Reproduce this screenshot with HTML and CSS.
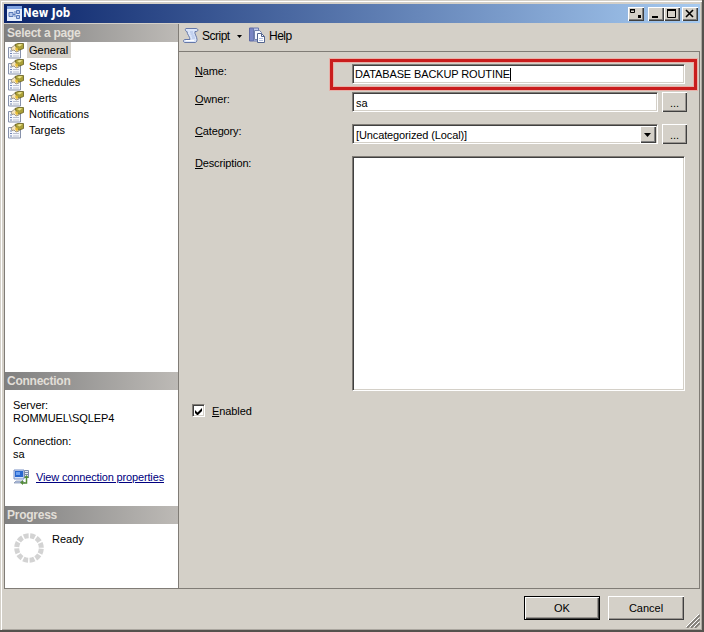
FILE: index.html
```html
<!DOCTYPE html>
<html lang="en">
<head>
<meta charset="utf-8">
<title>New Job</title>
<link rel="stylesheet" href="styles.css">
</head>
<body>
<svg width="0" height="0" class="defs">
  <symbol id="page" viewBox="0 0 16 16">
    <path d="M.5 4.500h12v10.500H.5z" fill="#f5f7fb" stroke="#8792ab"/>
    <path d="M2 8h2M2 10.500h2M2 13h2" stroke="#7185b5"/><path d="M5 10.500h6M5 13h6" stroke="#b9bfd0"/>
    <path d="M3 5l4-3 3 1 1 5-3 1-2-2-2 .5z" fill="#f6e6c0" stroke="#7c7462" stroke-width=".7"/>
    <path d="M7 1.500L10 .5h5.500v5l-4 1.500-3-2z" fill="#aaa038" stroke="#655e20" stroke-width=".8"/>
    <path d="M9 2l3-1 2.500.5-3 2z" fill="#eee58e"/><path d="M8 4l2.500 2-1.500 2.500L7 6z" fill="#e6bd35"/>
  </symbol>
</svg>
<div class="window">
  <header class="titlebar">
    <svg class="appicon" width="15" height="15" viewBox="0 0 15 15"><path fill="#e5edfb" d="M0 0h15v15H0z"/><path fill="#7fa2e0" d="M0 0h15v3H0z"/><path d="M2 6.500h4v4H2zM9.500 4.500h3v3h-3zM9.500 9.500h3v3h-3z" fill="#b7c9ed" stroke="#5878b8"/><path d="M6 8.500h2M8 5v6" stroke="#5878b8"/></svg>
    <span class="title">New Job</span>
    <span class="tb dock"><svg width="16" height="14"><path d="M2.500 3v2.500h4V3zM2 2.500h5" fill="none" stroke="#000"/><path d="M10 8h3v3h-3z"/></svg></span>
    <span class="tb"><svg width="16" height="14"><path d="M4 9h6v2H4z"/></svg></span>
    <span class="tb max"><svg width="16" height="14"><path d="M3.500 3v7.500h8V3" fill="none" stroke="#000"/><path d="M3 2h9v2H3z"/></svg></span>
    <span class="tb"><svg width="16" height="14"><path d="M4 3l7 7M11 3l-7 7" stroke="#000" stroke-width="1.600"/></svg></span>
  </header>
  <div class="body">
    <aside class="side">
      <h2>Select a page</h2>
      <ul class="pages">
        <li><svg width="16" height="16"><use href="#page"/></svg><span class="sel">General</span></li>
        <li><svg width="16" height="16"><use href="#page"/></svg><span>Steps</span></li>
        <li><svg width="16" height="16"><use href="#page"/></svg><span>Schedules</span></li>
        <li><svg width="16" height="16"><use href="#page"/></svg><span>Alerts</span></li>
        <li><svg width="16" height="16"><use href="#page"/></svg><span>Notifications</span></li>
        <li><svg width="16" height="16"><use href="#page"/></svg><span>Targets</span></li>
      </ul>
      <h2>Connection</h2>
      <div class="conn">
        <p>Server:<br><span class="server">ROMMUEL\SQLEP4</span></p>
        <p>Connection:<br>sa</p>
        <div class="link"><svg width="17" height="16" viewBox="0 0 17 16"><path d="M1 1h10v9H1z" fill="#d7e2f8" stroke="#7990c5"/><path d="M2 2h8v6H2z" fill="#2867cf"/><path d="M3 3h4v3H3z" fill="#6ba0f1"/><path d="M3 12h7l2 2H1z" fill="#b6c4e2" stroke="#7d8cac" stroke-width=".7"/><path d="M11.500 1.500h4v7h-4z" fill="#e7edf7" stroke="#7d8cac"/><path d="M12 3.500h3M12 5.500h3" stroke="#7d8cac"/><path d="M13.500 7v7H9" fill="none" stroke="#548c38" stroke-width="1.500"/><path d="M11 9l2.500-3L16 9zM10 11v5l-3-2.500z" fill="#548c38"/></svg><a>View connection properties</a></div>
      </div>
      <h2>Progress</h2>
      <div class="progress"><svg width="30" height="30" viewBox="0 0 30 30"><circle cx="15" cy="15" r="12.300" fill="none" stroke="#d3d3d3" stroke-width="5" stroke-dasharray="4.900 1.540" stroke-dashoffset="-.8"/></svg><span>Ready</span></div>
    </aside>
    <main class="main">
      <nav class="toolbar">
        <svg width="17" height="17" viewBox="0 0 17 17"><path d="M3 1.500h10c2.500 0 2.500 3 0 3h-1c-1 2 2 5 2 8 0 2-1 3-2 3H2c-2 0-2-3 0-3h5c0-3-3-5-3-8-2 0-2-3-1-3z" fill="#dce6fa" stroke="#6477a8"/><path d="M7 5h3M7.500 7h3M8.500 9h3M9 11h3" stroke="#a9bce4"/><path d="M3 13.500h8" stroke="#fff"/></svg>
        <span class="script">Script</span>
        <svg class="arrow" width="5" height="3"><path d="M0 0h5L2.500 3z"/></svg>
        <svg class="helpicon" width="16" height="16" viewBox="0 0 16 16"><path d="M.5 1h4v13h-4z" fill="#7985c4" stroke="#5f6aa4"/><path d="M4.500 1h5v13h-5z" fill="#c1caec" stroke="#6877ad"/><path d="M5.500 3.500h5l2 2v7h-7z" fill="#f4f7ff" stroke="#7382ad"/><path d="M8.500 6.500h4l3 3v6h-7z" fill="#fff" stroke="#53648f"/><path d="M12.500 6.500v3h3" fill="none" stroke="#53648f"/><path d="M10 11.500h4M10 13.500h4" stroke="#b3c0df"/></svg>
        <span class="help">Help</span>
      </nav>
      <form class="form">
        <div class="row name"><label><u>N</u>ame:</label><div class="field"><span class="caps">DATABASE BACKUP ROUTINE</span><i class="caret"></i></div></div>
        <div class="row owner"><label><u>O</u>wner:</label><div class="field">sa</div><span class="more">...</span></div>
        <div class="row category"><label><u>C</u>ategory:</label><div class="field combo"><span>[Uncategorized (Local)]</span><b class="drop"><svg width="7" height="4"><path d="M0 0h7L3.500 4z"/></svg></b></div><span class="more">...</span></div>
        <div class="row desc"><label><u>D</u>escription:</label><div class="field"></div></div>
        <div class="enabled"><i class="check"><svg width="9" height="9"><path d="M1 3v3l2 2h1l4-4V1L3.500 5.500z"/></svg></i><label><u>E</u>nabled</label></div>
      </form>
    </main>
  </div>
  <footer class="footer"><span class="btn ok"><span>OK</span></span><span class="btn"><span>Cancel</span></span></footer>
  <div class="highlight"></div>
  <svg class="grip" width="14" height="14"><path d="M1 14L14 1M5 14l9-9M9 14l5-5" stroke="#807d77" stroke-width="1.800"/><path d="M0 13L13 0M4 13l9-9M8 13l5-5" stroke="#fff"/></svg>
</div>
</body>
</html>
```
FILE: styles.css
```css
* { box-sizing: border-box; }
body { margin: 0; font: 11px/13px "Liberation Sans", Arial, sans-serif; color: #000; }
svg { display: block; flex: none; }
.defs { position: absolute; }
.window { position: relative; width: 704px; height: 632px; padding: 4px 2px 0 4px; background: #d4d0c8; border: solid #55524e; border-width: 0 2px 2px 0; box-shadow: inset 1px 1px #d4d0c8, inset 2px 2px #fff, inset -1px -1px #aaa69f; }
.titlebar { display: flex; align-items: center; width: 696px; height: 19px; padding: 0 2px 0 3px; background: linear-gradient(90deg, #0a246a, #a6caf0); }
.title { margin-left: 1px; flex: 1; color: #fff; font: bold 11.5px/13px "DejaVu Sans Condensed", "DejaVu Sans", sans-serif; }
.tb { width: 16px; height: 14px; background: #d4d0c8; box-shadow: inset 1px 1px #fff, inset -1px -1px #404040, inset -2px -2px #808080; }
.dock { margin-right: 4px; }
.max { margin-right: 2px; }
.body { display: flex; height: 565px; margin-top: 1px; width: 696px; border-bottom: 1px solid #807c76; }
.side { width: 175px; border-left: 1px solid #807c76; border-right: 1px solid #807c76; background: #fff; }
h2 { height: 18px; margin: 0; padding: 3px 0 0 2px; font: bold 12px/13px "Liberation Sans", Arial, sans-serif; letter-spacing: -.25px; color: #e2dfd8; background: linear-gradient(90deg, #808080, #bdbab6); }
.pages { height: 330px; margin: 0; padding: 0 0 0 3px; list-style: none; }
.pages li { display: flex; height: 16px; }
.pages svg { margin-top: 1px; }
.pages span { height: 16px; margin-left: 3px; padding: 2px 3px 0 2px; }
.pages .sel { background: #d4d0c8; }
.conn { height: 116px; padding: 9px 0 0 8px; }
.conn p { margin: 0 0 10px; letter-spacing: -.05px; }
.link { display: flex; align-items: center; margin-top: -2px; }
.link a { margin-left: 6px; color: #000080; letter-spacing: -.15px; text-decoration: underline; text-underline-offset: 1px; }
.progress { display: flex; padding: 9px 0 0 9px; }
.progress span { margin-left: 8px; }
.main { flex: 1; }
.toolbar { display: flex; height: 27px; padding: 3px 0 0 4px; }
.toolbar span { margin-top: 3px; font-size: 12px; letter-spacing: -.5px; }
.script { width: 28px; margin-left: 2px; white-space: nowrap; }
.arrow { margin: 8px 0 0 7px; }
.helpicon { margin-left: 7px; }
.help { margin-left: 4px; }
.form { height: 537px; margin: 0; padding: 12px 0 0 13px; border-top: 1px solid #807c76; border-right: 1px solid #807c76; }
.row { display: flex; height: 20px; }
.row label { width: 160px; padding-left: 3px; line-height: 14px; letter-spacing: -.15px; }
.name { margin-bottom: 8px; }
.owner, .category { margin-bottom: 12px; }
.field { display: flex; width: 306px; padding: 4px 3px 0; background: #fff; border: 1px solid #807c76; border-right-color: #fff; border-bottom-color: #fff; box-shadow: inset 1px 1px #404040, inset -1px -1px #d4d0c8; }
.name .field, .desc .field { width: 333px; }
.name .field { padding: 3px 2px 0; }
.caps { letter-spacing: -.12px; }
.caret { width: 1px; height: 13px; background: #000; }
.combo { justify-content: space-between; padding: 1px 1px 0 3px; letter-spacing: -.12px; }
.combo > span { padding-top: 3px; }
.drop { width: 16px; height: 17px; padding: 7px 0 0 4px; background: #d4d0c8; box-shadow: inset 1px 1px #fff, inset -1px -1px #404040, inset -2px -2px #808080; }
.more, .btn { background: #d4d0c8; text-align: center; box-shadow: inset 1px 1px #fff, inset -1px -1px #404040, inset -2px -2px #999590; }
.more { width: 25px; height: 20px; margin-left: 4px; padding-top: 5px; }
.desc { height: 235px; }
.enabled { display: flex; align-items: flex-start; margin-top: 13px; }
.check { width: 13px; height: 13px; padding: 2px 1px; background: #fff; border: 1px solid #807c76; border-right-color: #fff; border-bottom-color: #fff; box-shadow: inset 1px 1px #404040, inset -1px -1px #d4d0c8; }
.enabled label { margin: 1px 0 0 7px; letter-spacing: -.1px; }
.footer { display: flex; justify-content: flex-end; gap: 8px; padding: 7px 16px 0 0; }
.btn { width: 76px; height: 24px; padding-top: 6px; }
.ok { border: 1px solid #000; padding-top: 5px; }
.highlight { position: absolute; left: 330px; top: 59px; width: 367px; height: 31px; border: 3px solid #c91d1d; box-shadow: 0 0 0 1px #e8b0a8, inset 0 0 0 1px #e8b0a8; }
.grip { position: absolute; left: 686px; top: 614px; }
```
